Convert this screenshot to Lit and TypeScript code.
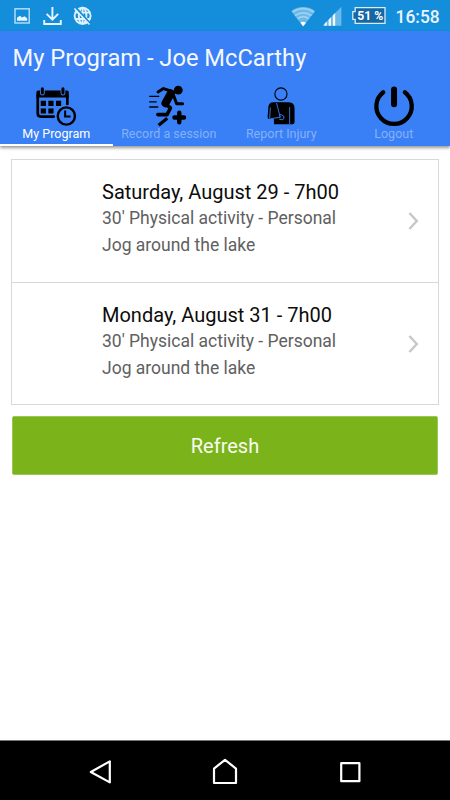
import { LitElement, html, css, svg } from "lit";
import { customElement, property } from "lit/decorators.js";

const calendar = svg`
  <path d="M38 95v18.6q0 3 3 3H54M67.6 95v9" fill="none" stroke="#000" stroke-width="2.7" stroke-linecap="round"/>
  <path d="M36.7 97.6v-5.4q0-1.8 1.6-1.8H67.4q1.6 0 1.6 1.8v5.4z"/>
  <path d="M42.6 88.8v4.4M63.2 88.8v4.4" stroke="#397ff6" stroke-width="4.8" stroke-linecap="round"/>
  <path d="M42.6 88.8v4.2M63.2 88.8v4.2" stroke="#000" stroke-width="3" stroke-linecap="round"/>
  <path d="M41 100.8h5.2v5.2H41zM48.6 100.8h5.2v5.2h-5.2zM56.2 100.8h5.2v5.2h-5.2zM41 108.4h5.2v5.2H41zM48.6 108.4h5.2v5.2h-5.2z"/>
  <circle cx="66.6" cy="116" r="8.6" fill="none" stroke="#000" stroke-width="2.4"/>
  <path d="M65.4 110.6v6h5.4" fill="none" stroke="#000" stroke-width="2"/>`;

const runner = svg`
  <circle cx="178" cy="90.2" r="4.4"/>
  <g fill="none" stroke="#000" stroke-linecap="round" stroke-linejoin="round">
    <path d="M157.8 92l5.4-3.4 8 2.6" stroke-width="3"/>
    <path d="M170.6 93.4l-5.4 9.8" stroke-width="8"/>
    <path d="M173.4 95.6l3 8.2h6" stroke-width="3"/>
    <path d="M165.6 104.2l4.6 3.8-3.4 6.6h-9.2" stroke-width="3.6"/>
    <path d="M167 118.2l-8.6 7" stroke-width="3.2" stroke-linecap="butt"/>
    <path d="M149 96.4h10M149 101.9h7.4M149 107h9" stroke-width="1.3" stroke-linecap="butt"/>
    <path d="M179 112.7v9.6M174.2 117.5h9.6" stroke-width="4.4"/>
  </g>`;

const injury = svg`
  <circle cx="281.2" cy="94" r="6.1" fill="none" stroke="#000" stroke-width="1.1"/>
  <path d="M273.5 102.3H289q5.8 0 5.8 6v14q0 2-2 2H274.2v-5.2h-4.1q-2.4 0-2.2-2.6l.7-9.4q.5-4.8 4.9-4.8z"/>
  <path d="M270.6 107.4l-.7 11.4M276.8 103l3.7 14.2-10 1.6M280.5 117.2q-1.6-3 1-2.6l2.6 1.6v2.6q-1 1.8-4.6.4M289.9 107v17" fill="none" stroke="#397ff6" stroke-width=".9"/>`;

const power = svg`
  <path d="M383 92.2a17.7 17.7 0 1 0 21.6 0" fill="none" stroke="#000" stroke-width="4.3" stroke-linecap="round"/>
  <path d="M393.8 89.4v14.8" stroke="#000" stroke-width="6" stroke-linecap="round"/>`;

@customElement("status-bar")
export class StatusBar extends LitElement {
  static styles = css`
    :host { display: flex; height: 31px; background: #148edb; }
    svg { display: block; width: 450px; height: 31px; }
    text { font-family: Roboto, sans-serif; fill: #e9f5fd; }
    .pct { font-size: 13.5px; font-weight: 700; fill: #fff; }
    .time { font-size: 18px; font-weight: 500; }
  `;
  render() {
    return html`<svg viewBox="0 0 450 31">
      <rect x="15" y="8.8" width="14.2" height="14.2" fill="none" stroke="#b9e0f7" stroke-width="1.4"/>
      <path d="M17 20.8v-3l3-2 2 1.6 2.6-1.2 2.6 2.4v2.2z" fill="#e9f5fd"/>
      <path d="M52.4 7v12.4M46.6 13.8l5.8 5.8 5.8-5.8M44.2 20v4h16.6v-4" fill="none" stroke="#e9f5fd" stroke-width="1.9"/>
      <g fill="none" stroke="#dff1fc" stroke-width="1.9">
        <circle cx="82.6" cy="15.8" r="8"/>
        <ellipse cx="82.6" cy="15.8" rx="3.8" ry="8"/>
        <path d="M75 12.6h15.2M75 19h15.2M82.6 8v16"/>
      </g>
      <path d="M75.8 7.8L90.4 23.6" stroke="#148edb" stroke-width="2"/>
      <path d="M74.4 8.6L89.4 24.6" stroke="#e9f5fd" stroke-width="1.5"/>
      <path d="M303.2 26.5L291.3 11.2a19.3 19.3 0 0 1 23.8 0z" fill="#69b9e9"/>
      <g fill="none" stroke="#9dd1f1" stroke-width="1.7">
        <path d="M292.6 12.2a17.4 17.4 0 0 1 21.2 0M295 15.6a13.4 13.4 0 0 1 16.4 0M297.6 18.8a9.4 9.4 0 0 1 11.2 0"/>
      </g>
      <path d="M303.2 26.3l-2.8-3.6a4.6 4.6 0 0 1 5.6 0z" fill="#fff"/>
      <path d="M322.5 25.7L341.4 6.8v18.9z" fill="#69b9e9"/>
      <path d="M324.4 25.7v-1.8l2.4-2.4v4.2zM328.6 25.7v-6l2.4-2.4v8.4zM332.8 25.7V15.4l2.4-2.4v12.7z" fill="#f2faff"/>
      <path d="M355.2 7.6h29.8v15.8h-29.8v-4h-2.4v-7.8h2.4z" fill="#1667a3" stroke="#d7ecf9" stroke-width="1.3"/>
      <text class="pct" x="357.2" y="20.2" textLength="26" lengthAdjust="spacingAndGlyphs">51 %</text>
      <text class="time" x="395.6" y="22.6" textLength="44" lengthAdjust="spacingAndGlyphs">16:58</text>
    </svg>`;
  }
}

@customElement("tab-item")
export class TabItem extends LitElement {
  @property() label = "";
  @property({ type: Boolean }) active = false;
  @property({ attribute: false }) icon: unknown;
  @property({ type: Number }) left = 0;
  static styles = css`
    :host { display: block; flex: 1; min-width: 0; }
    .tab { box-sizing: border-box; height: 61px; display: flex; flex-direction: column; align-items: center; border-bottom: 2px solid transparent; font: 400 12.5px/15px Roboto, sans-serif; color: #85b1fa; white-space: nowrap; }
    .active { color: #fff; border-color: #fff; }
    svg { width: 44px; height: 42px; flex: none; margin-bottom: -1px; }
  `;
  render() {
    return html`<div class="tab ${this.active ? "active" : ""}">
      <svg viewBox="${this.left} 85 44 42">${this.icon}</svg>
      <span>${this.label}</span>
    </div>`;
  }
}

@customElement("session-row")
export class SessionRow extends LitElement {
  @property() when = "";
  @property() activity = "";
  @property() note = "";
  static styles = css`
    :host { display: flex; box-sizing: border-box; height: 122px; padding: 19px 18px 0 90px; font-family: Roboto, sans-serif; justify-content: space-between; }
    .when { font-size: 20px; line-height: 27px; color: #0c0c0c; }
    .line { font-size: 17.5px; line-height: 27px; color: #606060; }
    .first { margin-top: -1px; }
    svg { width: 13px; height: 20px; margin-top: 32px; }
  `;
  render() {
    return html`<div>
        <div class="when">${this.when}</div>
        <div class="line first">${this.activity}</div>
        <div class="line">${this.note}</div>
      </div>
      <svg viewBox="0 0 13 20"><path d="M2.4 2l7.4 8-7.4 8" fill="none" stroke="#c8c8c8" stroke-width="2.5"/></svg>`;
  }
}

@customElement("app-root")
export class AppRoot extends LitElement {
  static styles = css`
    :host { display: flex; flex-direction: column; height: 800px; background: #fff; font-family: Roboto, sans-serif; overflow: hidden; }
    header { height: 115px; background: #397ff6; box-shadow: 0 2px 3px rgba(0, 0, 0, 0.4); flex: none; }
    h1 { margin: 0; padding-left: 12.5px; height: 54px; font-size: 23.7px; line-height: 55px; font-weight: 400; color: #f4f8ff; white-space: nowrap; }
    nav { display: flex; height: 61px; }
    main { flex: 1; padding: 13px 12px 0 11px; }
    .list { box-sizing: border-box; width: 428px; height: 246px; border: 1px solid #d8d8d8; }
    .list session-row { height: 121.5px; }
    .list session-row + session-row { height: 122.5px; border-top: 1px solid #d8d8d8; }
    button { display: block; width: 426px; height: 59px; margin: 11px 0 0 1px; padding: 0; border: 1px solid #9cc65a; border-radius: 2px; background: #7ab31a; color: #f8fcf2; font: 400 20px Roboto, sans-serif; }
    footer { height: 60px; background: #000; flex: none; }
    footer svg { display: block; width: 450px; height: 60px; }
  `;
  render() {
    return html`<status-bar></status-bar>
      <header>
        <h1>My Program - Joe McCarthy</h1>
        <nav>
          <tab-item label="My Program" active .icon=${calendar} .left=${34.25}></tab-item>
          <tab-item label="Record a session" .icon=${runner} .left=${146.75}></tab-item>
          <tab-item label="Report Injury" .icon=${injury} .left=${259.25}></tab-item>
          <tab-item label="Logout" .icon=${power} .left=${371.75}></tab-item>
        </nav>
      </header>
      <main>
        <div class="list">
          <session-row when="Saturday, August 29 - 7h00" activity="30' Physical activity - Personal" note="Jog around the lake"></session-row>
          <session-row when="Monday, August 31 - 7h00" activity="30' Physical activity - Personal" note="Jog around the lake"></session-row>
        </div>
        <button>Refresh</button>
      </main>
      <footer>
        <svg viewBox="0 740 450 60" fill="none" stroke="#fff" stroke-width="2.2" stroke-linejoin="round">
          <path d="M0 740.5h450" stroke="#777" stroke-width="1"/>
          <path d="M109.8 761.4v21L90.8 772z"/>
          <path d="M214 783v-14.4l11-8.8 11 8.8V783z"/>
          <path d="M341.2 763.2h18.2v18h-18.2z"/>
        </svg>
      </footer>`;
  }
}
